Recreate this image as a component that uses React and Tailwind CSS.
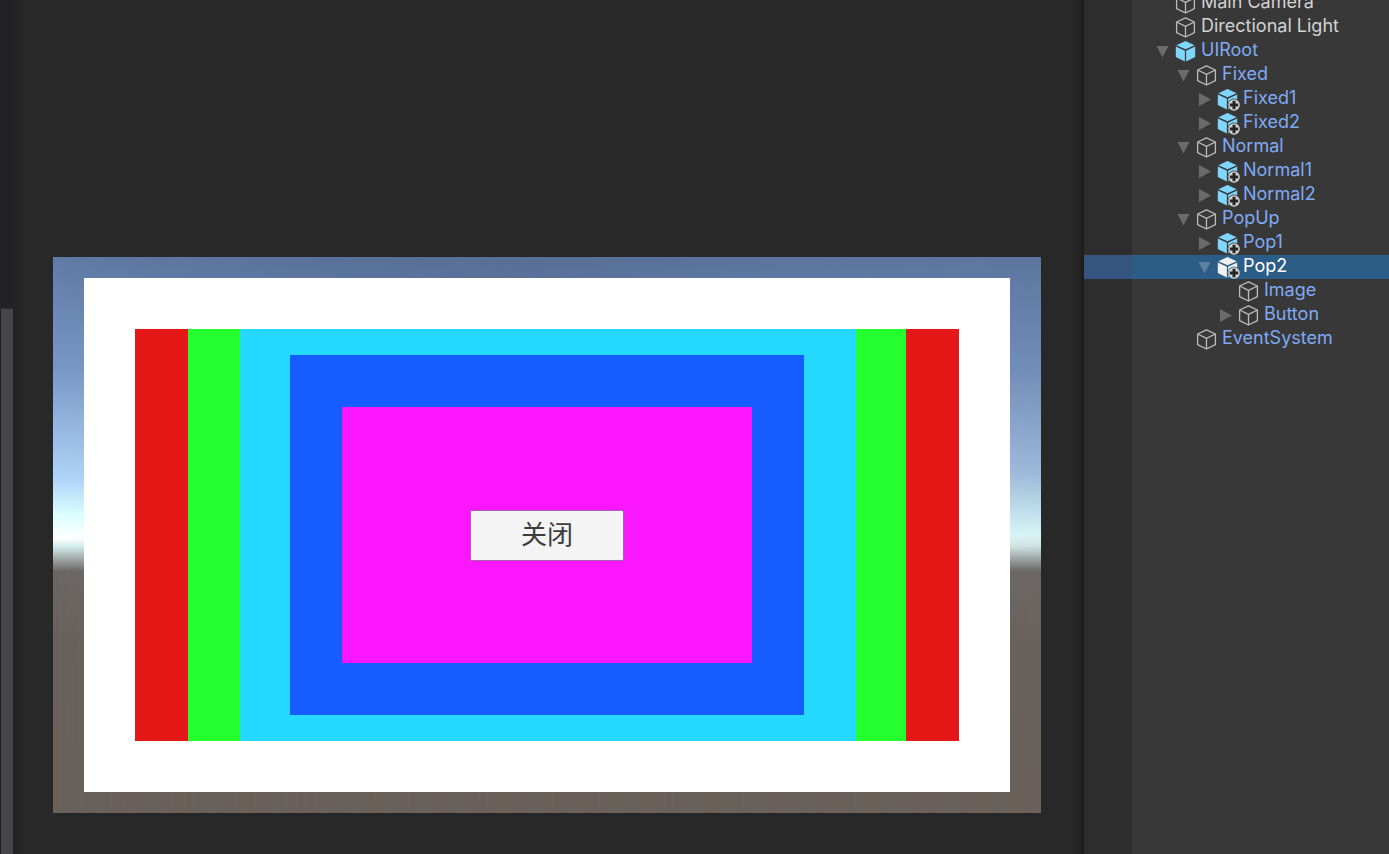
import React from "react";

const nodes = [
  { name: "Main Camera", depth: 0, kind: "outline", tone: "plain" },
  { name: "Directional Light", depth: 0, kind: "outline", tone: "plain" },
  { name: "UIRoot", depth: 0, kind: "prefab", fold: "open" },
  { name: "Fixed", depth: 1, kind: "outline", fold: "open" },
  { name: "Fixed1", depth: 2, kind: "prefab", fold: "closed", added: true },
  { name: "Fixed2", depth: 2, kind: "prefab", fold: "closed", added: true },
  { name: "Normal", depth: 1, kind: "outline", fold: "open" },
  { name: "Normal1", depth: 2, kind: "prefab", fold: "closed", added: true },
  { name: "Normal2", depth: 2, kind: "prefab", fold: "closed", added: true },
  { name: "PopUp", depth: 1, kind: "outline", fold: "open" },
  { name: "Pop1", depth: 2, kind: "prefab", fold: "closed", added: true },
  { name: "Pop2", depth: 2, kind: "prefab", fold: "open", added: true, selected: true },
  { name: "Image", depth: 3, kind: "outline" },
  { name: "Button", depth: 3, kind: "outline", fold: "closed" },
  { name: "EventSystem", depth: 1, kind: "outline" },
];

const indents = ["pl-6", "pl-[45px]", "pl-[66px]", "pl-[87px]"];

function Cube({ kind, added, selected }) {
  const fill = selected ? "#f0f0f0" : "#7fd6fd";
  const back = selected ? "#2c5d87" : "#383838";
  return (
    <svg className="h-6 w-6 shrink-0" viewBox="0 0 24 24" aria-hidden="true">
      {kind === "outline" ? (
        <path
          d="M10.5 2.8 19.4 7v10.6L10.5 22 1.6 17.6V7ZM1.6 7l8.9 4.3L19.4 7M10.5 11.3V22"
          fill="none"
          stroke="#bcbcbc"
          strokeWidth="1.3"
          strokeLinejoin="round"
        />
      ) : (
        <g fill={fill}>
          <path d="M10.5 2 19.6 6.2 10.5 10.3 1.4 6.2Z" />
          <path d="M0.8 7.5 9.9 11.7V22.4L0.8 18Z" />
          <path d="M20.2 7.5 11.1 11.7V22.4L20.2 18Z" />
        </g>
      )}
      {added && (
        <g>
          <circle cx="17" cy="18" r="6.4" fill={back} />
          <circle cx="17" cy="18" r="5.8" fill="#d2d2d2" />
          <path d="M17 13.8v8.4M12.8 18h8.4" stroke="#262626" strokeWidth="3" />
        </g>
      )}
    </svg>
  );
}

function Fold({ state, selected }) {
  return (
    <svg className="h-6 w-[14px] shrink-0" viewBox="0 0 14 24" aria-hidden="true">
      {state && (
        <path
          d={state === "open" ? "M0.5 7H12.5L6.5 18.5Z" : "M1 6V19L13 12.5Z"}
          fill={selected ? "#5f81a0" : "#6b6b6b"}
        />
      )}
    </svg>
  );
}

function Row({ node }) {
  const color = node.selected
    ? "text-white"
    : node.tone === "plain"
      ? "text-[#d2d2d2]"
      : "text-[#7faaf3]";
  return (
    <li className={node.selected ? "flex h-6 bg-[#2c5d87]" : "flex h-6"}>
      <span
        className={
          node.selected ? "w-12 shrink-0 bg-[#35547f]" : "w-12 shrink-0 bg-[#2d2d2d]"
        }
      />
      <button
        type="button"
        className={`flex min-w-0 flex-1 items-start text-left ${indents[node.depth]} ${color}`}
      >
        <Fold state={node.fold} selected={node.selected} />
        <span className="flex gap-[2px] pl-[5px]">
          <Cube kind={node.kind} added={node.added} selected={node.selected} />
          <span className="text-[18px] leading-[22px] whitespace-nowrap">{node.name}</span>
        </span>
      </button>
    </li>
  );
}

function GameView() {
  return (
    <div className="isolate grid aspect-[988/556] w-full">
      <div className="col-start-1 row-start-1 bg-[linear-gradient(to_bottom,#607ba6_0%,#7896c6_20%,#b0d4f9_40%,#dcffff_46.5%,#ffffff_50.5%,#d6eeee_52%,#6c6766_56.5%,#69615b_70%,#6a615b_100%)]" />
      <div className="col-start-1 row-start-1 bg-[linear-gradient(to_bottom,#5c759f_0%,#708cb7_20%,#9db9d9_39%,#d6f4f5_50%,#cfe2e2_52%,#6c6766_56.5%,#69615b_70%,#6a615b_100%)] mask-l-from-0% mask-l-to-100%" />
      <div className="col-start-1 row-start-1 bg-[radial-gradient(ellipse_50%_40%_at_50%_0%,#53698f,transparent)]" />
      <div className="z-10 col-start-1 row-start-1 flex px-[31px] py-[21px]">
        <div className="flex flex-1 bg-white p-[51px]">
          <div className="flex flex-1 bg-[#e61717] px-[53px]">
            <div className="flex flex-1 bg-[#24ff2e] pr-[50px] pl-[52px]">
              <div className="flex flex-1 bg-[#24d8ff] py-[26px] pr-[52px] pl-[50px]">
                <div className="flex flex-1 bg-[#175cff] p-[52px]">
                  <div className="flex flex-1 items-center justify-center bg-[#fa17ff]">
                    <button
                      type="button"
                      className="h-[51px] w-[154px] rounded-[2px] border border-[#a55fae] bg-[#f4f4f4] pb-1 font-['Noto_Sans_CJK_SC',sans-serif] text-[26px] leading-none text-[#3c3c3c]"
                    >
                      关闭
                    </button>
                  </div>
                </div>
              </div>
            </div>
          </div>
        </div>
      </div>
    </div>
  );
}

export default function App() {
  return (
    <div className="flex h-screen overflow-hidden bg-[#282828] font-['Inter',sans-serif]">
      <aside className="flex w-[13px] shrink-0 flex-col bg-[#202025]">
        <div className="h-[309px] shrink-0 border-b-2 border-[#29292d]" />
        <div className="ml-px flex-1 bg-[#464649]" />
      </aside>
      <main className="flex min-w-0 flex-1 flex-col justify-end bg-[linear-gradient(to_right,#212121,#282828_10px,#282828_calc(100%-14px),#212121_calc(100%-3px),#1a1a1a)] pr-[43px] pb-[41px] pl-10">
        <GameView />
      </main>
      <nav
        aria-label="Hierarchy"
        className="flex w-[305px] shrink-0 flex-col bg-[#383838]"
      >
        <ul className="-mt-[9px]">
          {nodes.map((node) => (
            <Row key={node.name} node={node} />
          ))}
        </ul>
        <div className="w-12 flex-1 bg-[#2d2d2d]" />
      </nav>
    </div>
  );
}
